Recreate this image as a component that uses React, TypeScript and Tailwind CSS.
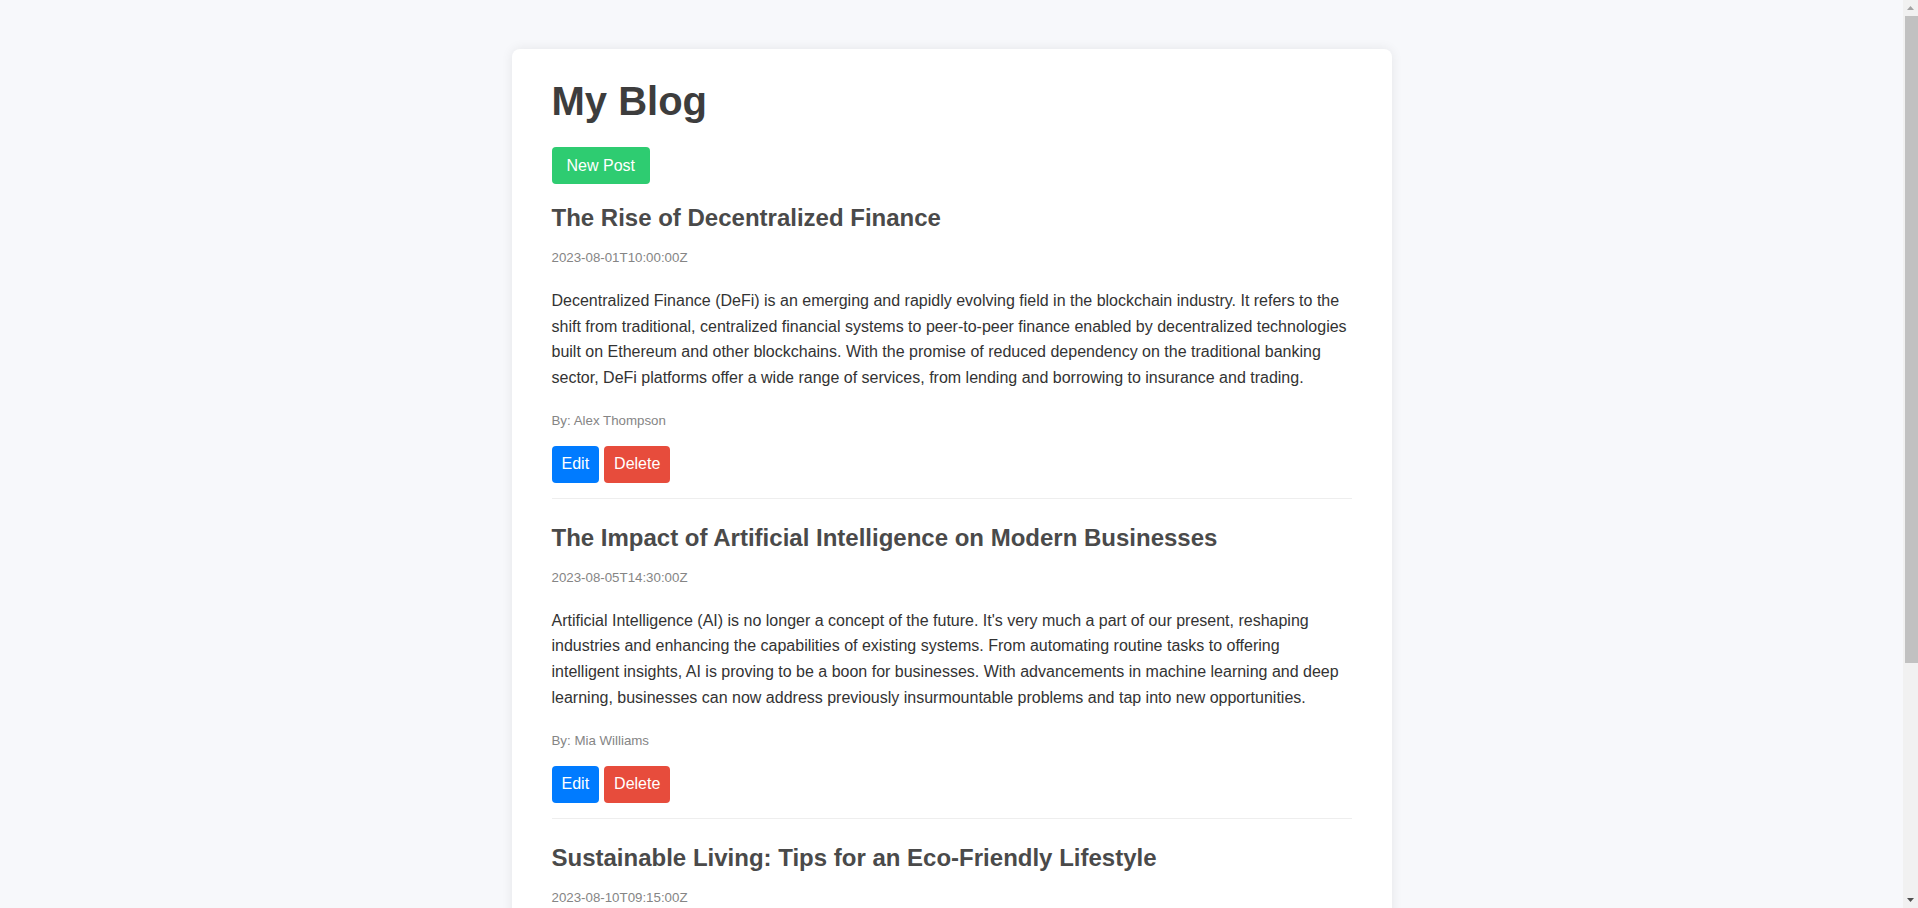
import React from "react";

type Post = {
  id: number;
  title: string;
  date: string;
  content: string;
  author: string;
};

const POSTS: Post[] = [
  {
    id: 1,
    title: "The Rise of Decentralized Finance",
    date: "2023-08-01T10:00:00Z",
    content:
      "Decentralized Finance (DeFi) is an emerging and rapidly evolving field in the blockchain industry. It refers to the shift from traditional, centralized financial systems to peer-to-peer finance enabled by decentralized technologies built on Ethereum and other blockchains. With the promise of reduced dependency on the traditional banking sector, DeFi platforms offer a wide range of services, from lending and borrowing to insurance and trading.",
    author: "Alex Thompson",
  },
  {
    id: 2,
    title: "The Impact of Artificial Intelligence on Modern Businesses",
    date: "2023-08-05T14:30:00Z",
    content:
      "Artificial Intelligence (AI) is no longer a concept of the future. It's very much a part of our present, reshaping industries and enhancing the capabilities of existing systems. From automating routine tasks to offering intelligent insights, AI is proving to be a boon for businesses. With advancements in machine learning and deep learning, businesses can now address previously insurmountable problems and tap into new opportunities.",
    author: "Mia Williams",
  },
  {
    id: 3,
    title: "Sustainable Living: Tips for an Eco-Friendly Lifestyle",
    date: "2023-08-10T09:15:00Z",
    content:
      "Sustainable living is about reducing our environmental footprint by making conscious choices in our daily lives. From cutting down on single-use plastics and conserving energy at home to choosing locally sourced food and greener modes of transport, small changes can add up to a big difference. Adopting an eco-friendly lifestyle not only helps the planet but often leads to a healthier and more fulfilling way of living.",
    author: "Liam Johnson",
  },
];

const PostItem = ({ post }: { post: Post }) => (
  <div className="border-b border-[#eeeeee] pb-[15px] mt-[25px] first:mt-[20px]">
    <h2 className="text-[24px] leading-[28px] font-bold text-[#4a4a4a]">
      {post.title}
    </h2>
    <p className="mt-[18px] text-[13.3px] leading-[16px] text-[#858585]">
      {post.date}
    </p>
    <p className="mt-[22px] text-[16px] leading-[25.6px] text-[#333333]">
      {post.content}
    </p>
    <p className="mt-[23px] text-[13.3px] leading-[16px] text-[#858585]">
      By: {post.author}
    </p>
    <div className="mt-[16.5px] flex gap-[5px]">
      <button className="h-[37px] px-[10px] rounded-[4px] bg-[#007bff] text-white text-[16px] cursor-pointer">
        Edit
      </button>
      <button className="h-[37px] px-[10px] rounded-[4px] bg-[#e74c3c] text-white text-[16px] cursor-pointer">
        Delete
      </button>
    </div>
  </div>
);

// fake browser scrollbar, the page in the reference shows a classic one
const ScrollBar = () => (
  <div className="fixed top-0 right-0 h-screen w-[15px] bg-[#f1f1f1] flex flex-col items-end">
    <div className="h-[16px] w-[15px] flex items-center justify-center">
      <svg width="7" height="4" viewBox="0 0 7 4">
        <path d="M0 4 L3.5 0 L7 4 Z" fill="#a3a3a3" />
      </svg>
    </div>
    <div className="h-[647px] w-[13px] bg-[#c1c1c1]" />
    <div className="flex-1" />
    <div className="h-[16px] w-[15px] flex items-center justify-center">
      <svg width="7" height="4" viewBox="0 0 7 4">
        <path d="M0 0 L7 0 L3.5 4 Z" fill="#505050" />
      </svg>
    </div>
  </div>
);

export default function App() {
  return (
    <div
      className="min-h-screen bg-[#f7f8fb] pr-[15px]"
      style={{ fontFamily: '"Liberation Sans", Arial, sans-serif' }}
    >
      <div className="pt-[49px] pb-[40px]">
        <div className="mx-auto w-[880px] bg-white rounded-lg shadow-[0_0_12px_rgba(0,0,0,0.08)] px-[40px] pt-[28px] pb-[40px]">
          <h1 className="text-[40px] leading-[48px] font-bold text-[#3d3d3d]">
            My Blog
          </h1>
          <button className="mt-[22px] h-[37px] px-[15px] rounded-[4px] bg-[#2ecc71] text-white text-[16px] cursor-pointer">
            New Post
          </button>
          <div>
            {POSTS.map((post) => (
              <PostItem key={post.id} post={post} />
            ))}
          </div>
        </div>
      </div>
      <ScrollBar />
    </div>
  );
}
